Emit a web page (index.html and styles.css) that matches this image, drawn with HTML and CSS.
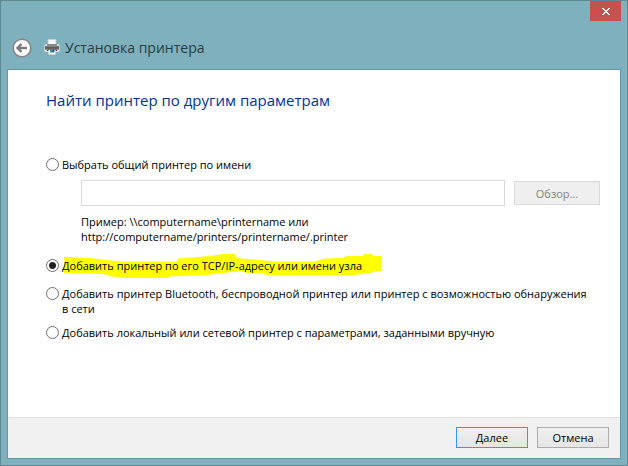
FILE: index.html
```html
<!DOCTYPE html>
<html lang="ru">
<head>
<meta charset="utf-8">
<title>Установка принтера</title>
<link rel="stylesheet" href="styles.css">
</head>
<body>
<div class="window">
  <header class="titlebar">
    <button class="close" type="button" aria-label="Закрыть">
      <svg width="8" height="7" viewBox="0 0 8 7" shape-rendering="crispEdges"><path d="M0 0h2v1h1v1h2V1h1V0h2v1H7v1H6v1H5v1h1v1h1v1h1v1H6V6H5V5H3v1H2v1H0V6h1V5h1V4h1V3H2V2H1V1H0z" fill="#fff"/></svg>
    </button>
    <div class="heading">
      <button class="back" type="button" aria-label="Назад">
        <svg width="20" height="20" viewBox="0 0 20 20"><circle cx="10" cy="10" r="8.8" fill="#fff" stroke="#858585" stroke-width="1.6"/><path d="M15 10H6M9.500 6L5.500 10l4 4" fill="none" stroke="#7b7b7b" stroke-width="2.4"/></svg>
      </button>
      <svg class="printer" width="16" height="16" viewBox="0 0 16 16">
        <defs><linearGradient id="body" x2="0" y2="1"><stop offset="0" stop-color="#8b8b8b"/><stop offset=".5" stop-color="#505050"/><stop offset="1" stop-color="#a8a8a8"/></linearGradient></defs>
        <path d="M4 .5h8v5H4z" fill="#f4f6f7" stroke="#c3cdd1" stroke-width=".8"/>
        <path d="M1.500 5h13l1.300 2v5l-1 1H1.200l-1-1V7z" fill="#d6d8d9"/>
        <path d="M3 5h10v2H3z" fill="#8b8b8b"/>
        <path d="M1 7h14v4H1z" fill="url(#body)"/>
        <path d="M3 10.500h10V12H3z" fill="#555"/>
        <path d="M4.500 11h7v4.500h-7z" fill="#fff"/>
        <path d="M6 11h2v2.500H6z" fill="#3a9a78"/><path d="M8 11h2.500v2.500H8z" fill="#246ab0"/>
      </svg>
      <span class="title">Установка принтера</span>
    </div>
  </header>
  <form class="page">
    <main class="content">
      <h1>Найти принтер по другим параметрам</h1>
      <div class="option">
        <input type="radio" name="method" id="shared">
        <label for="shared">Выбрать общий принтер по имени</label>
      </div>
      <div class="shared">
        <div class="picker">
          <input class="path" type="text" aria-label="Имя принтера">
          <button class="button browse" type="button" disabled>Обзор...</button>
        </div>
        <p>Пример: \\computername\printername или<br>http://computername/printers/printername/.printer</p>
      </div>
      <div class="option">
        <input type="radio" name="method" id="tcp" checked>
        <label class="marked" for="tcp">
          <svg class="marker" width="320" height="26" viewBox="62 252 320 26"><path d="M64 256l26 1 16 2 17 1.500h54l1-3 32-2.500 13-2h12l2 4 38 3.500h40l10-3 18-.5 4-2h16l1-2h8l1 2h8v15l-9 1v1l-19 2h-86l-5-2h-15l-7-2-33 4-37 1.500-2 1.500h-41l-15-1.500-9-2.500-39-1z" fill="#ff0"/></svg>
          <span>Добавить принтер по его TCP/IP-адресу или имени узла</span>
        </label>
      </div>
      <div class="option wrapped">
        <input type="radio" name="method" id="bluetooth">
        <label for="bluetooth">Добавить принтер Bluetooth, беспроводной принтер или принтер с возможностью обнаружения<br>в сети</label>
      </div>
      <div class="option">
        <input type="radio" name="method" id="manual">
        <label for="manual">Добавить локальный или сетевой принтер с параметрами, заданными вручную</label>
      </div>
    </main>
    <footer class="footer">
      <button class="button next" type="submit">Далее</button>
      <button class="button" type="button">Отмена</button>
    </footer>
  </form>
</div>
</body>
</html>
```
FILE: styles.css
```css
* { box-sizing: border-box; }
body {
  margin: 0;
  font: 11px/15px "Open Sans", "Noto Sans", sans-serif;
  color: #000;
}
.window {
  min-height: 100vh;
  display: flex;
  flex-direction: column;
  padding: 0 6px 6px;
  border: 1px solid #5f8792;
  background: #7eb0bd;
}
.titlebar { display: flex; flex-direction: column; }
.close {
  align-self: flex-end;
  display: flex;
  align-items: center;
  justify-content: center;
  width: 31px;
  height: 20px;
  padding: 1px 0 0;
  border: 0;
  background: #c75050;
}
.heading {
  display: flex;
  align-items: center;
  padding: 15px 5px 9px;
  height: 48px;
}
.back { display: flex; padding: 0; border: 0; background: none; }
.printer { margin: -2px 5px 0 12px; }
.title { font-size: 14px; line-height: 24px; color: #2b3c42; }
.page {
  flex: 1;
  display: flex;
  flex-direction: column;
  border: 1px solid #6796a2;
  background: #fff;
}
.content { flex: 1; padding: 19px 16px 20px 38px; }
h1 {
  margin: 0 0 46px;
  font-size: 15px;
  line-height: 22px;
  font-weight: 400;
  color: #003399;
}
.option { display: flex; align-items: flex-start; gap: 3px; margin-bottom: 13px; }
.option input {
  appearance: none;
  flex: none;
  width: 13px;
  height: 13px;
  margin: 1px 0 0;
  border: 1px solid #707070;
  border-radius: 50%;
  background: #fff;
}
.option input:checked { background: radial-gradient(circle, #222 3px, #fff 4px); }
.wrapped { margin-bottom: 9px; }
.shared { margin: -5px 4px 14px 35px; }
.picker { display: flex; align-items: center; gap: 9px; }
.path {
  flex: 1;
  min-width: 0;
  height: 26px;
  border: 1px solid #d9d9d9;
  background: #fff;
}
p { margin: 8px 0 0; }
.marked { position: relative; }
.marked span { position: relative; }
.marker { position: absolute; left: 0; top: -5px; }
.button {
  width: 72px;
  height: 21px;
  padding: 0;
  border: 1px solid #acacac;
  background: linear-gradient(#f0f0f0, #e5e5e5);
  font: inherit;
  color: #000;
}
.browse {
  width: 86px;
  height: 24px;
  border-color: #d9d9d9;
  background: #efefef;
  color: #838383;
}
.next { border-color: #3399ff; }
.footer {
  display: flex;
  justify-content: flex-end;
  gap: 9px;
  padding: 9px 11px 10px;
  border-top: 1px solid #dfdfdf;
  background: #f0f0f0;
}
```
